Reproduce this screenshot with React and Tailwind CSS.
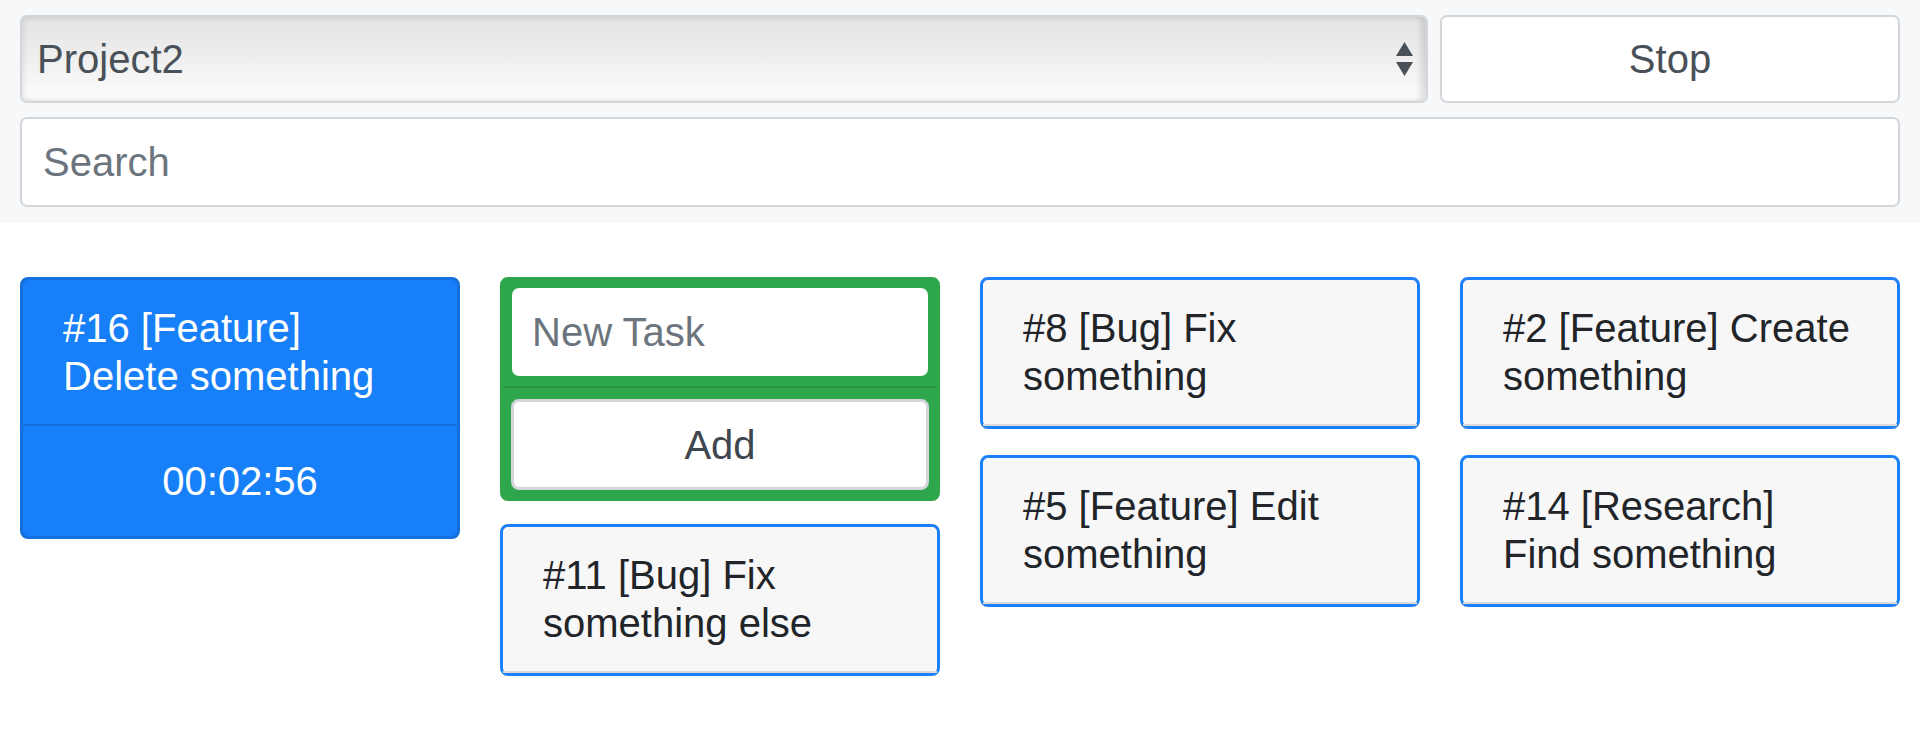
import { useState } from 'react';

const font = "font-['Liberation_Sans','Helvetica','Arial',sans-serif]";

const TaskCard = ({ task }) => (
  <div className="rounded-[8px] border-[3px] border-[#1c80f8] bg-[#f7f7f7] text-[#212529]">
    <div className="px-[40px] py-[24px] border-b-2 border-[#dadada] text-[40px] leading-[48px]">
      #{task.id} [{task.type}] {task.title}
    </div>
  </div>
);

const App = () => {
  const [search, setSearch] = useState('');
  const [newTask, setNewTask] = useState('');

  const columns = [
    [{ id: 11, type: 'Bug', title: 'Fix something else' }],
    [
      { id: 8, type: 'Bug', title: 'Fix something' },
      { id: 5, type: 'Feature', title: 'Edit something' },
    ],
    [
      { id: 2, type: 'Feature', title: 'Create something' },
      { id: 14, type: 'Research', title: 'Find something' },
    ],
  ];

  return (
    <div className={`min-h-screen bg-white ${font}`}>
      {/* Toolbar */}
      <div className="bg-[#f7f8f9] px-[20px] pt-[15px] pb-[16px] flex flex-col gap-[14px]">
        <div className="flex gap-[12px]">
          <div className="relative flex-1 h-[88px] rounded-[7px] border-2 border-[#d3d7dc] bg-linear-to-b from-[#e4e4e4] via-[#efefef] to-[#fdfdfd] shadow-[inset_3px_0_4px_rgba(0,0,0,0.06),inset_-5px_0_6px_rgba(0,0,0,0.12)] flex items-center pl-[15px] text-[40px] text-[#495057]">
            Project2
            <svg
              className="absolute right-[13px] top-1/2 -translate-y-1/2"
              width="17"
              height="34"
              viewBox="0 0 17 34"
            >
              <path d="M8.5 0 L17 14 L0 14 Z" fill="#495057" />
              <path d="M0 20 L17 20 L8.5 34 Z" fill="#495057" />
            </svg>
          </div>
          <button className="w-[460px] h-[88px] rounded-[7px] border-2 border-[#d3d7dc] bg-white text-[40px] text-[#495057]">
            Stop
          </button>
        </div>
        <input
          value={search}
          onChange={(e) => setSearch(e.target.value)}
          placeholder="Search"
          className="w-full h-[90px] rounded-[7px] border-2 border-[#d3d7dc] bg-white pl-[21px] text-[40px] text-[#495057] placeholder:text-[#6c757d] outline-none"
        />
      </div>

      {/* Board */}
      <div className="grid grid-cols-4 gap-x-[40px] px-[20px] pt-[54px] items-start">
        {/* Active task */}
        <div className="rounded-[8px] border-[3px] border-[#1470dc] bg-[#177ff7] text-white">
          <div className="px-[40px] py-[24px] border-b-2 border-[#1570dc] text-[40px] leading-[48px]">
            #16 [Feature] Delete something
          </div>
          <div className="py-[31px] text-center text-[40px] leading-[48px]">00:02:56</div>
        </div>

        {/* New task + first column */}
        <div className="flex flex-col gap-[23px]">
          <div className="rounded-[8px] border-[3px] border-[#2ea64b] bg-[#2ea64b]">
            <div className="px-[9px] pt-[8px] pb-[10px] border-b-2 border-[#2a9444]">
              <input
                value={newTask}
                onChange={(e) => setNewTask(e.target.value)}
                placeholder="New Task"
                className="block w-full h-[88px] rounded-[7px] bg-white pl-[20px] text-[40px] text-[#495057] placeholder:text-[#6c757d] outline-none"
              />
            </div>
            <div className="px-[8px] pt-[11px] pb-[8px]">
              <button className="block w-full h-[91px] rounded-[8px] border-[3px] border-[#d3d6da] bg-white text-[40px] text-[#3f464d]">
                Add
              </button>
            </div>
          </div>
          {columns[0].map((t) => (
            <TaskCard key={t.id} task={t} />
          ))}
        </div>

        {columns.slice(1).map((col, i) => (
          <div key={i} className="flex flex-col gap-[26px]">
            {col.map((t) => (
              <TaskCard key={t.id} task={t} />
            ))}
          </div>
        ))}
      </div>
    </div>
  );
};

export default App;
